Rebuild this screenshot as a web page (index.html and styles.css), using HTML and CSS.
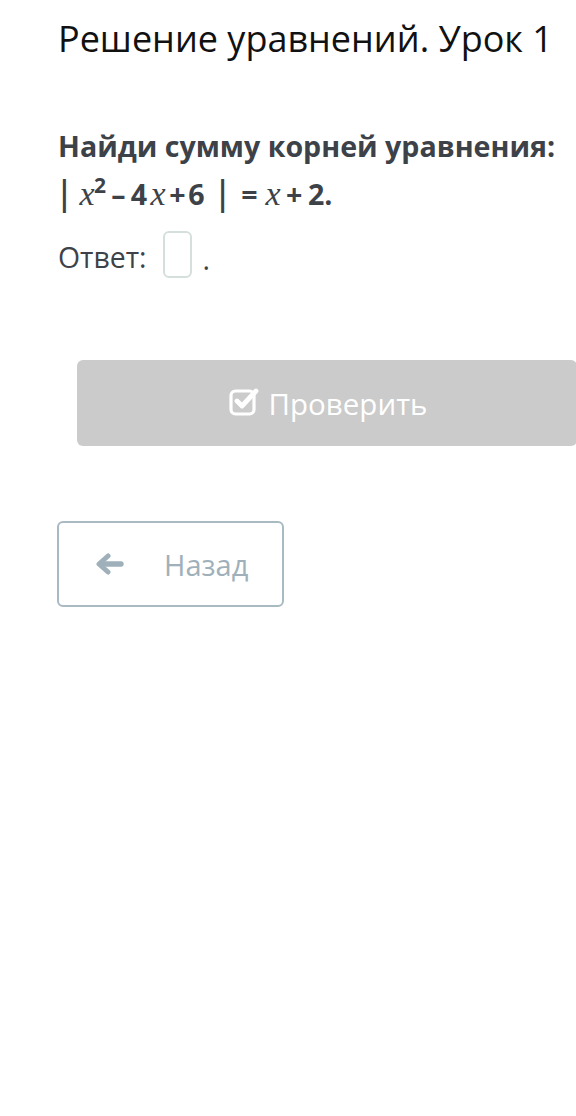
FILE: index.html
```html
<!DOCTYPE html>
<html lang="ru">
<head>
<meta charset="utf-8">
<link rel="stylesheet" href="styles.css">
</head>
<body>
<div class="page">
  <h1 class="title">Решение уравнений. Урок 1</h1>
  <div class="question">
    <p class="q-text">Найди сумму корней уравнения:</p>
    <p class="q-text eq"><span class="t bar-l">|</span><span class="t mx w-x1">x</span><span class="t sup">2</span><span class="t w-minus">–</span><span class="t w-4">4</span><span class="t mx w-x2">x</span><span class="t w-plus1">+</span><span class="t w-6">6</span><span class="t bar-r">|</span><span class="t w-eq">=</span><span class="t mx w-x3">x</span><span class="t w-plus2">+</span><span class="t w-end">2.</span></p>
    <div class="answer">
      <span>Ответ:</span>
      <span class="box"></span>
      <span class="dot">.</span>
    </div>
  </div>
  <div class="check-row">
    <button class="check">
      <svg class="check-ico" viewBox="0 0 30 30" width="30" height="30">
        <rect x="2" y="5" width="23" height="23" rx="4.5" fill="none" stroke="#fff" stroke-width="3.2"/>
        <path d="M8 15 L13 20 L27 5" fill="none" stroke="#fff" stroke-width="4.8" stroke-linecap="round" stroke-linejoin="round"/>
      </svg>
      <span>Проверить</span>
    </button>
  </div>
  <button class="back">
    <svg class="back-ico" viewBox="0 0 28 22" width="28" height="22">
      <path d="M12 3 L3 11 L12 19" fill="none" stroke="#9fb0ba" stroke-width="5" stroke-linecap="round" stroke-linejoin="round"/>
      <path d="M5 11 H25" fill="none" stroke="#9fb0ba" stroke-width="5.4" stroke-linecap="round"/>
    </svg>
    <span>Назад</span>
  </button>
</div>
</body>
</html>
```
FILE: styles.css
```css
html, body {
  margin: 0;
  padding: 0;
  background: #fff;
}
body {
  font-family: "Open Sans", "Noto Sans", sans-serif;
}
.page {
  padding: 14px 0 0 58px;
  display: flex;
  flex-direction: column;
  align-items: flex-start;
}
.title {
  margin: 0;
  font-size: 36px;
  font-weight: 400;
  color: #111;
  line-height: 50px;
  white-space: nowrap;
}
.question {
  margin-top: 58px;
}
.q-text {
  margin: 0;
  font-size: 28.6px;
  font-weight: 700;
  color: #3d4249;
  line-height: 48px;
  white-space: nowrap;
}
.eq .t {
  display: inline-block;
  text-align: center;
}
.eq .bar-l {
  width: 21px;
  margin-left: -3px;
  text-align: left;
  font-weight: 600;
  font-size: 34px;
  line-height: 1;
}
.eq .bar-r {
  width: 33px;
  font-weight: 600;
  font-size: 34px;
  line-height: 1;
}
.mx {
  font-family: "Liberation Serif", "DejaVu Serif", serif;
  font-style: italic;
  font-weight: 400;
  font-size: 34px;
}
.eq .w-x1 { width: 22px; }
.eq .sup {
  width: 14px;
  margin-left: -5px;
  font-size: 21px;
  vertical-align: 0.55em;
  line-height: 1;
}
.eq .w-minus { width: 23px; }
.eq .w-4 { width: 18px; }
.eq .w-x2 { width: 20px; }
.eq .w-plus1 { width: 19px; }
.eq .w-6 { width: 19px; }
.eq .w-eq { width: 21px; }
.eq .w-x3 { width: 26px; }
.eq .w-plus2 { width: 14px; }
.eq .w-end {
  text-align: left;
  padding-left: 8px;
}
.answer {
  margin-top: 15px;
  display: flex;
  align-items: center;
  font-size: 28.4px;
  color: #3d4249;
  height: 48px;
}
.box {
  display: inline-block;
  width: 25px;
  height: 43px;
  border: 2px solid #d5dfdb;
  border-radius: 6px;
  margin-left: 16px;
  margin-right: 11px;
  margin-top: -6px;
}
.dot {
  margin-top: 4px;
}
.check-row {
  margin-top: 79px;
  margin-left: 19px;
}
.check {
  width: 500px;
  height: 86px;
  background: #cbcbcb;
  border: none;
  border-radius: 6px;
  display: flex;
  align-items: center;
  justify-content: center;
  gap: 10px;
  font-family: "Open Sans", "Noto Sans", sans-serif;
  font-size: 29.5px;
  color: #fff;
  padding: 0 0 0 2px;
}
.check-ico {
  margin-top: -4px;
}
.back {
  margin-top: 75px;
  margin-left: -1px;
  width: 227px;
  height: 86px;
  background: #fff;
  border: 2px solid #a9bac2;
  border-radius: 6px;
  display: flex;
  align-items: center;
  padding: 0 0 0 37px;
  gap: 40px;
  font-family: "Open Sans", "Noto Sans", sans-serif;
  font-size: 29px;
  color: #9fb0ba;
  box-sizing: border-box;
}
```
